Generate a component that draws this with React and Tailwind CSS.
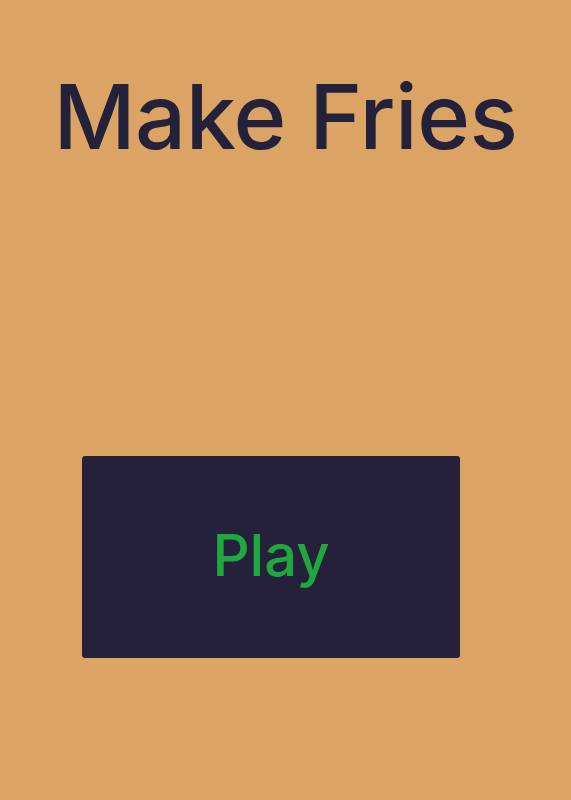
export default function App() {
  return (
    <div className="min-h-[800px] w-full bg-[#dba465] font-['Inter',sans-serif]">
      <div className="pt-[62px] text-center">
        <h1 className="text-[90px] font-medium leading-[110px] tracking-[-0.5px] text-[#24213a]">
          Make Fries
        </h1>
      </div>
      <div className="mt-[284px] ml-[82px]">
        <button className="flex h-[202px] w-[378px] items-center justify-center rounded-[3px] bg-[#25213a] pb-[4px] text-[58px] font-medium text-[#1fa83d]">
          Play
        </button>
      </div>
    </div>
  );
}
